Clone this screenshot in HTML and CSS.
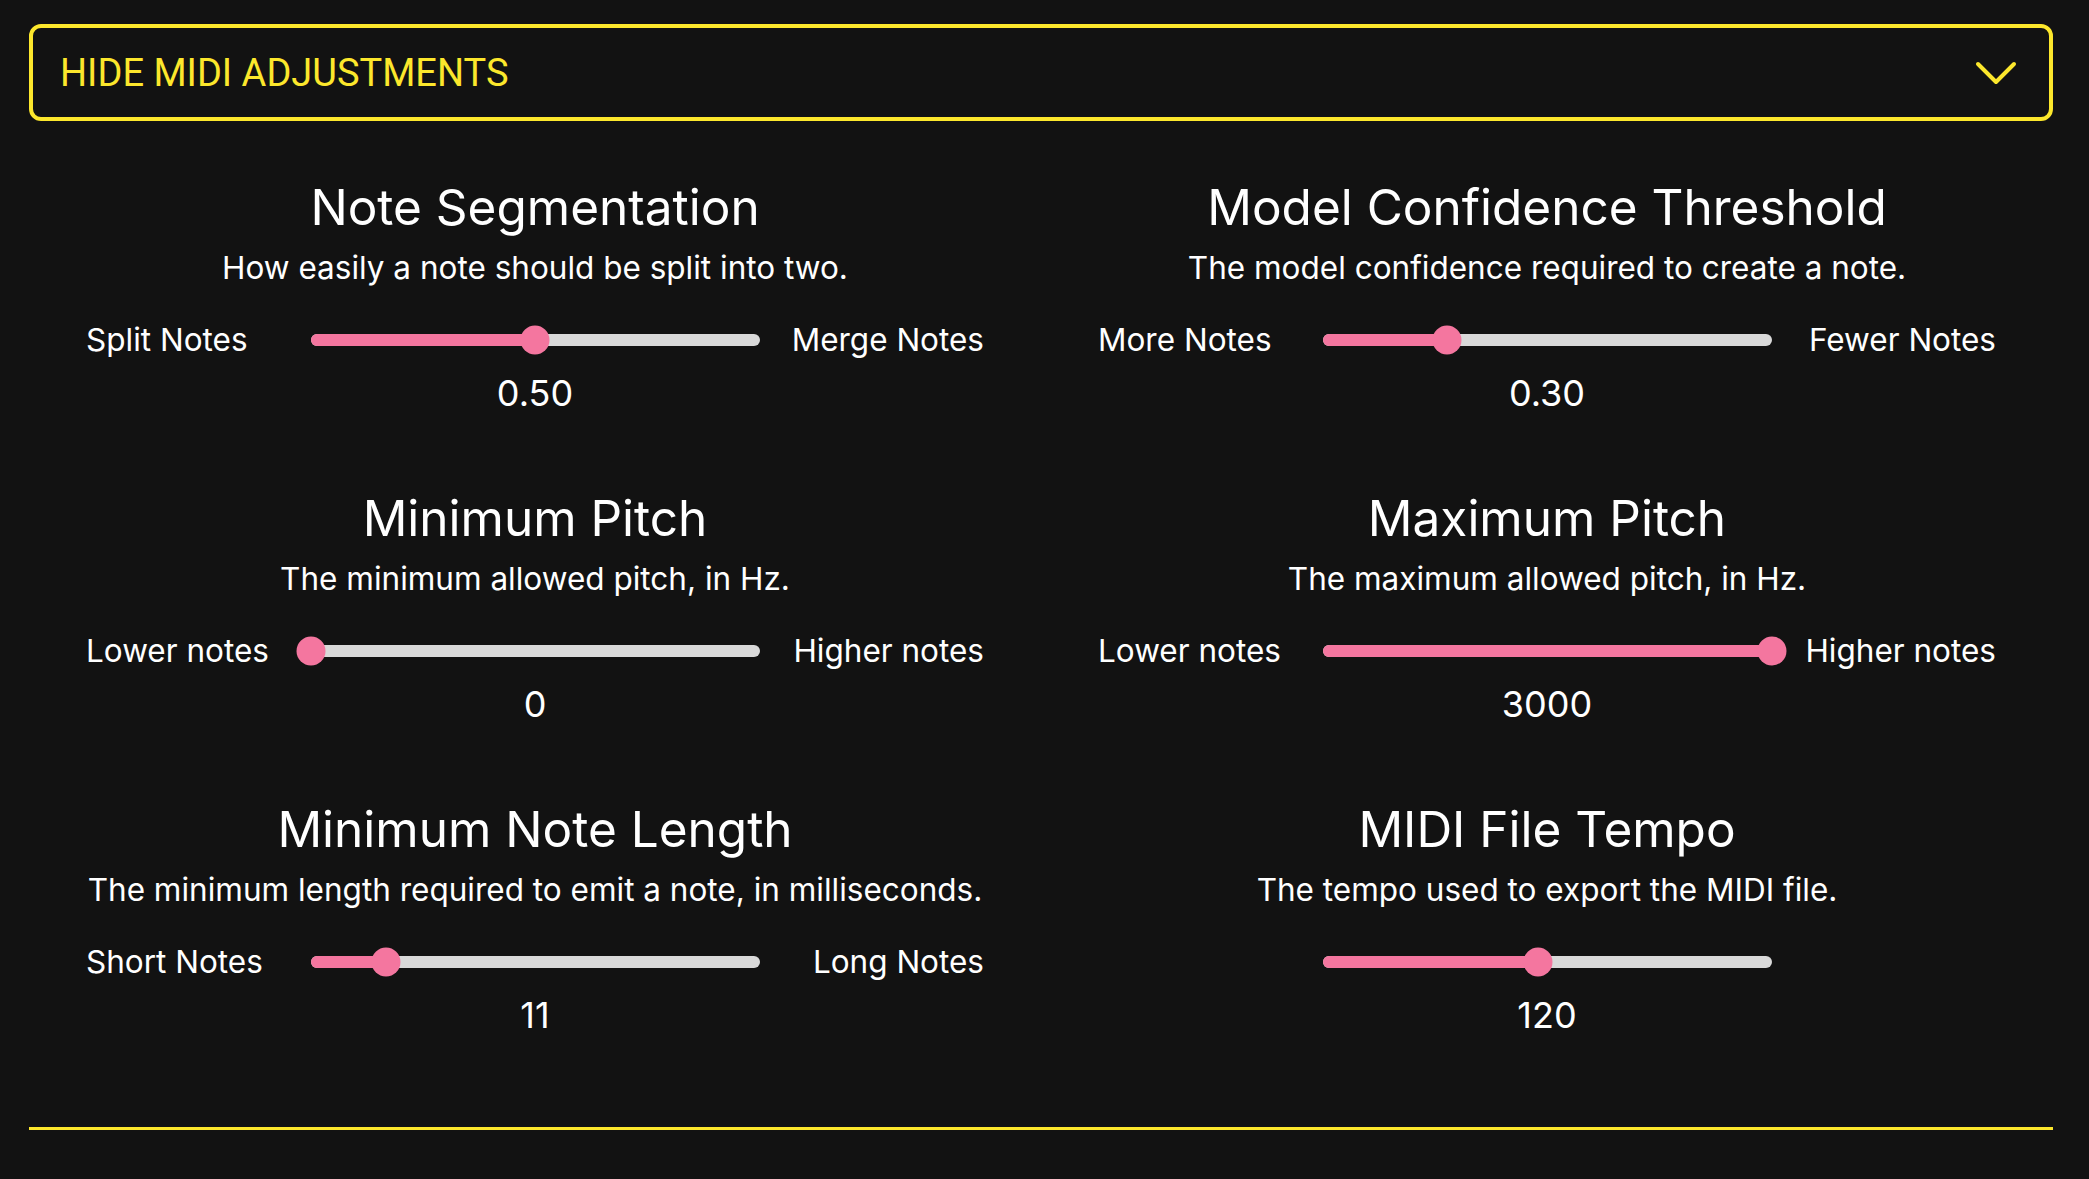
FILE: index.html
```html
<!DOCTYPE html>
<html lang="en">
<head>
    <meta charset="UTF-8">
    <meta name="viewport" content="width=device-width, initial-scale=1.0">
    <title>MIDI Adjustments</title>
    <link rel="stylesheet" href="styles.css">
</head>
<body>

    <div class="page">
        <!-- Collapse toggle -->
        <div class="toggle">
            <span class="toggle-text">Hide MIDI Adjustments</span>
            <svg class="chevron" width="42" height="24" viewBox="0 0 42 24">
                <polyline points="3,3 21,21 39,3" fill="none" stroke="currentColor" stroke-width="4" stroke-linecap="round" stroke-linejoin="round"/>
            </svg>
        </div>

        <div class="controls">
            <!-- Note Segmentation -->
            <div class="control">
                <h2 class="title">Note Segmentation</h2>
                <div class="desc">How easily a note should be split into two.</div>
                <div class="slider-row">
                    <span class="label-left">Split Notes</span>
                    <div class="slider">
                        <div class="slider-fill" style="width: 50%;"></div>
                        <div class="slider-thumb" style="left: 50%;"></div>
                    </div>
                    <span class="label-right">Merge Notes</span>
                </div>
                <div class="value">0.50</div>
            </div>

            <!-- Model Confidence Threshold -->
            <div class="control">
                <h2 class="title">Model Confidence Threshold</h2>
                <div class="desc">The model confidence required to create a note.</div>
                <div class="slider-row">
                    <span class="label-left">More Notes</span>
                    <div class="slider">
                        <div class="slider-fill" style="width: 27.8%;"></div>
                        <div class="slider-thumb" style="left: 27.8%;"></div>
                    </div>
                    <span class="label-right">Fewer Notes</span>
                </div>
                <div class="value">0.30</div>
            </div>

            <!-- Minimum Pitch -->
            <div class="control">
                <h2 class="title">Minimum Pitch</h2>
                <div class="desc">The minimum allowed pitch, in Hz.</div>
                <div class="slider-row">
                    <span class="label-left">Lower notes</span>
                    <div class="slider">
                        <div class="slider-fill" style="width: 0%;"></div>
                        <div class="slider-thumb" style="left: 0%;"></div>
                    </div>
                    <span class="label-right">Higher notes</span>
                </div>
                <div class="value">0</div>
            </div>

            <!-- Maximum Pitch -->
            <div class="control">
                <h2 class="title">Maximum Pitch</h2>
                <div class="desc">The maximum allowed pitch, in Hz.</div>
                <div class="slider-row">
                    <span class="label-left">Lower notes</span>
                    <div class="slider">
                        <div class="slider-fill" style="width: 100%;"></div>
                        <div class="slider-thumb" style="left: 100%;"></div>
                    </div>
                    <span class="label-right">Higher notes</span>
                </div>
                <div class="value">3000</div>
            </div>

            <!-- Minimum Note Length -->
            <div class="control">
                <h2 class="title">Minimum Note Length</h2>
                <div class="desc">The minimum length required to emit a note, in milliseconds.</div>
                <div class="slider-row">
                    <span class="label-left">Short Notes</span>
                    <div class="slider">
                        <div class="slider-fill" style="width: 16.8%;"></div>
                        <div class="slider-thumb" style="left: 16.8%;"></div>
                    </div>
                    <span class="label-right">Long Notes</span>
                </div>
                <div class="value">11</div>
            </div>

            <!-- MIDI File Tempo -->
            <div class="control">
                <h2 class="title">MIDI File Tempo</h2>
                <div class="desc">The tempo used to export the MIDI file.</div>
                <div class="slider-row">
                    <span class="label-left"></span>
                    <div class="slider">
                        <div class="slider-fill" style="width: 48%;"></div>
                        <div class="slider-thumb" style="left: 48%;"></div>
                    </div>
                    <span class="label-right"></span>
                </div>
                <div class="value">120</div>
            </div>
        </div>

        <div class="divider"></div>
    </div>

</body>
</html>
```

FILE: styles.css
```css
body {
    margin: 0;
    padding: 0;
    background-color: #121212;
    color: #ffffff;
    font-family: "Inter", "Noto Sans", sans-serif;
}
.page {
    padding: 24px 36px 0 29px;
}
.toggle {
    box-sizing: border-box;
    height: 97px;
    border: 4px solid #fce72c;
    border-radius: 12px;
    display: flex;
    justify-content: space-between;
    align-items: center;
    padding: 0 32px 0 27px;
    color: #fce72c;
}
.toggle-text {
    font-family: "Roboto", "Liberation Sans", sans-serif;
    font-size: 38px;
    text-transform: uppercase;
}
.chevron {
    display: block;
}
.controls {
    display: grid;
    grid-template-columns: 1fr 1fr;
    row-gap: 74px;
    padding-top: 57px;
}
.control {
    text-align: center;
}
.title {
    margin: 0;
    font-size: 49.5px;
    line-height: 58px;
    font-weight: 400;
}
.desc {
    margin-top: 12px;
    font-size: 31.5px;
    line-height: 40px;
}
.slider-row {
    display: grid;
    grid-template-columns: 1fr 449px 1fr;
    align-items: center;
    height: 40px;
    margin-top: 32px;
    padding: 0 57px;
    font-size: 31.5px;
    line-height: 40px;
}
.label-left {
    justify-self: start;
}
.label-right {
    justify-self: end;
}
.slider {
    position: relative;
    height: 12px;
    border-radius: 6px;
    background-color: #d9d9d9;
}
.slider-fill {
    height: 100%;
    border-radius: 6px;
    background-color: #f4769f;
}
.slider-thumb {
    position: absolute;
    top: 50%;
    width: 29px;
    height: 29px;
    border-radius: 50%;
    background-color: #f4769f;
    transform: translate(-50%, -50%);
}
.value {
    margin-top: 11px;
    font-size: 36px;
    line-height: 44px;
}
.divider {
    margin-top: 90px;
    height: 3px;
    background-color: #fce72c;
}
```
